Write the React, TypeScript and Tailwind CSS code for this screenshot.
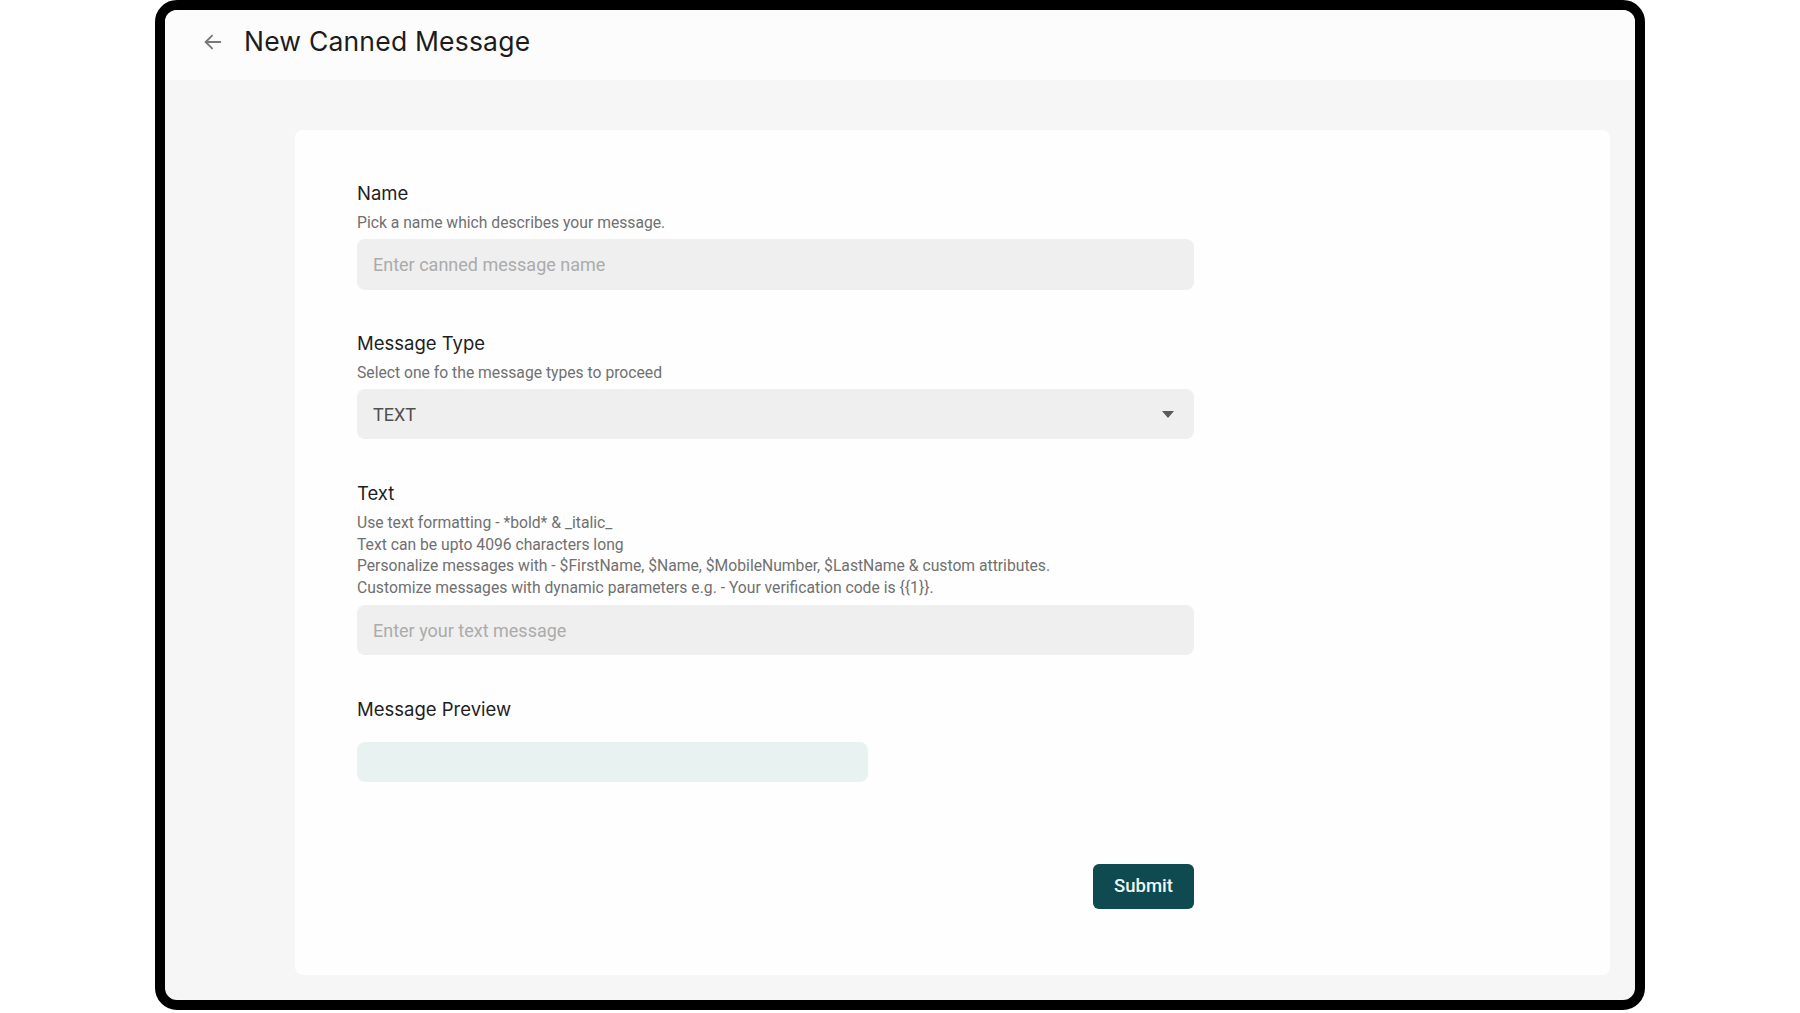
import React from "react";

export default function App() {
  const heading = { fontFamily: "Inter, 'Noto Sans', sans-serif" };
  const body = { fontFamily: "Roboto, 'Liberation Sans', sans-serif" };
  return (
    <div className="w-full h-[1013px] bg-white flex justify-center overflow-hidden">
      <div className="w-[1490px] h-[1010px] border-[10px] border-black rounded-[22px] overflow-hidden flex flex-col bg-[#f6f6f6]">
        <div className="h-[70px] shrink-0 bg-[#fcfcfc] flex items-center pl-[37px] pb-[7px]">
          <svg width="22" height="22" viewBox="0 0 24 24" fill="none" stroke="#7a7a7a" strokeWidth="2" strokeLinecap="round" strokeLinejoin="round">
            <path d="M20 12H4" />
            <path d="M11 5l-7 7 7 7" />
          </svg>
          <h1 className="ml-[20px] text-[26.5px] leading-none text-[#1c1c1c] tracking-[0.2px]" style={heading}>
            New Canned Message
          </h1>
        </div>
        <div className="flex-1 flex pl-[130px] pr-[25px] pt-[50px] pb-[25px]">
          <div className="flex-1 bg-[#fefefe] rounded-lg pl-[62px] pt-[51px]">
            <div className="w-[837px] flex flex-col" style={body}>
              <div className="text-[18.5px] leading-[24px] text-[#1e1e1e]" style={heading}>Name</div>
              <div className="mt-[8px] text-[15.7px] leading-[20px] text-[#707070]">Pick a name which describes your message.</div>
              <div className="mt-[6px] h-[51px] rounded-lg bg-[#efefef] flex items-center px-[16px] text-[18px] text-[#ababab]">
                Enter canned message name
              </div>

              <div className="mt-[41px] text-[18.5px] leading-[24px] text-[#1e1e1e]" style={heading}>Message Type</div>
              <div className="mt-[8px] text-[15.7px] leading-[20px] text-[#707070]">Select one fo the message types to proceed</div>
              <div className="mt-[6px] h-[50px] rounded-lg bg-[#efefef] flex items-center justify-between pl-[16px] pr-[20px] text-[18px] text-[#505050]">
                <span>TEXT</span>
                <svg width="12" height="7" viewBox="0 0 12 7">
                  <path d="M0 0h12L6 7z" fill="#5a5a5a" />
                </svg>
              </div>

              <div className="mt-[42px] text-[18.5px] leading-[24px] text-[#1e1e1e]" style={heading}>Text</div>
              <div className="mt-[7px] text-[15.7px] leading-[21.5px] text-[#707070]">
                <div>Use text formatting - *bold* &amp; _italic_</div>
                <div>Text can be upto 4096 characters long</div>
                <div>Personalize messages with - $FirstName, $Name, $MobileNumber, $LastName &amp; custom attributes.</div>
                <div>Customize messages with dynamic parameters e.g. - Your verification code is {"{{1}}"}.</div>
              </div>
              <div className="mt-[7px] h-[50px] rounded-lg bg-[#efefef] flex items-center px-[16px] text-[18px] text-[#ababab]">
                Enter your text message
              </div>

              <div className="mt-[42px] text-[18.5px] leading-[24px] text-[#1e1e1e]" style={heading}>Message Preview</div>
              <div className="mt-[21px] w-[511px] h-[40px] rounded-lg bg-[#e8f3f1]" />

              <div className="mt-[82px] flex justify-end">
                <button className="w-[101px] h-[45px] rounded-md bg-[#0e4a4f] text-[#eef6f6] text-[18.5px] font-medium" style={body}>
                  Submit
                </button>
              </div>
            </div>
          </div>
        </div>
      </div>
    </div>
  );
}
